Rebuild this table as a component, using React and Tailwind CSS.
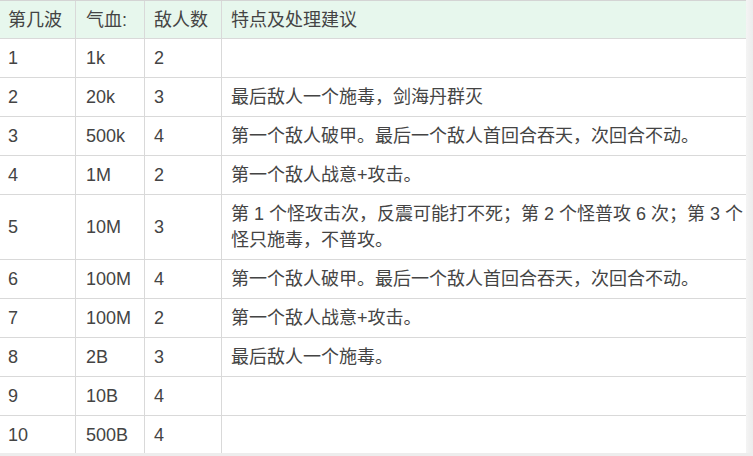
const rows = [
  ['1', '1k', '2', ''],
  ['2', '20k', '3', '最后敌人一个施毒，剑海丹群灭'],
  ['3', '500k', '4', '第一个敌人破甲。最后一个敌人首回合吞天，次回合不动。'],
  ['4', '1M', '2', '第一个敌人战意+攻击。'],
  [
    '5',
    '10M',
    '3',
    <>
      <span className="whitespace-nowrap">第 1 个怪攻击次，反震可能打不死；第 2 个怪普攻 6 次；第 3 个</span>
      <br />
      怪只施毒，不普攻。
    </>,
  ],
  ['6', '100M', '4', '第一个敌人破甲。最后一个敌人首回合吞天，次回合不动。'],
  ['7', '100M', '2', '第一个敌人战意+攻击。'],
  ['8', '2B', '3', '最后敌人一个施毒。'],
  ['9', '10B', '4', ''],
  ['10', '500B', '4', ''],
];

function Row({ cells, header }) {
  return (
    <div className={`flex border-b border-[#d9d9d9] ${header ? 'bg-[#e7f7ed] h-[38px]' : 'bg-white'}`}>
      <div className="w-[76px] shrink-0 border-r border-[#d9d9d9] pl-[8px] py-[6px] flex items-center">{cells[0]}</div>
      <div className="w-[69px] shrink-0 border-r border-[#d9d9d9] pl-[10px] py-[6px] flex items-center">{cells[1]}</div>
      <div className="w-[77px] shrink-0 border-r border-[#d9d9d9] pl-[9px] py-[6px] flex items-center">{cells[2]}</div>
      <div className="flex-1 min-w-0 pl-[9px] py-[6px] flex items-center">
        <div>{cells[3]}</div>
      </div>
    </div>
  );
}

export default function App() {
  return (
    <div className="w-[753px] h-[456px] overflow-hidden bg-white flex flex-col text-[18px] leading-[26px] text-[#444] font-['Liberation_Sans','Noto_Sans_CJK_SC',sans-serif]">
      <div className="flex flex-1 min-h-0">
        <div className="flex-1 min-w-0 border-t border-[#d4d4d4]">
          <Row header cells={['第几波', '气血:', '敌人数', '特点及处理建议']} />
          {rows.map((r) => (
            <Row key={r[0]} cells={r} />
          ))}
        </div>
        {/* vertical scrollbar track */}
        <div className="w-[7px] shrink-0 bg-gradient-to-r from-[#f4f4f4] to-[#ececec]" />
      </div>
      {/* horizontal scrollbar track */}
      <div className="h-[3px] shrink-0 bg-[#ededed]" />
    </div>
  );
}
